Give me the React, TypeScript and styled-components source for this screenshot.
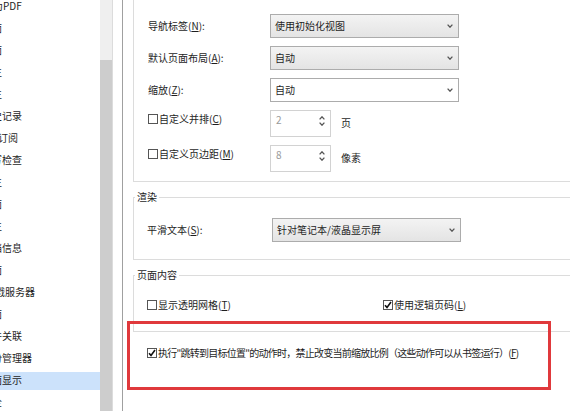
import React from "react";
import styled, { createGlobalStyle } from "styled-components";

const GlobalStyle = createGlobalStyle`
  html, body {
    margin: 0;
    padding: 0;
    background: #fff;
  }
  body {
    font-family: "Noto Sans CJK SC", "Noto Sans", sans-serif;
  }
`;

const navItems = [
  { text: "为PDF", shift: -7 },
  { text: "面", shift: -8 },
  { text: "面", shift: -8 },
  { text: "生", shift: -8 },
  { text: "生", shift: -8 },
  { text: "史记录", shift: -8 },
  { text: "订阅", shift: -2 },
  { text: "写检查", shift: -8 },
  { text: "生", shift: -8 },
  { text: "面", shift: -8 },
  { text: "生", shift: -8 },
  { text: "档信息", shift: -8 },
  { text: "面", shift: -8 },
  { text: "戳服务器", shift: -5 },
  { text: "面", shift: -8 },
  { text: "件关联", shift: -8 },
  { text: "份管理器", shift: -8 },
  { text: "面显示", shift: -8, selected: true },
  { text: "全", shift: -8 },
];

function Chevron({ up }: { up?: boolean }) {
  return (
    <svg width="6" height="4" viewBox="0 0 6 4">
      <path
        d={up ? "M0.6 3.4 L3 0.8 L5.4 3.4" : "M0.6 0.6 L3 3.2 L5.4 0.6"}
        fill="none"
        stroke="#555"
        strokeWidth="1.3"
      />
    </svg>
  );
}

function Check({ checked, children }: { checked?: boolean; children: React.ReactNode }) {
  return (
    <CheckLabel>
      <CheckBox>
        {checked && (
          <svg width="8" height="8" viewBox="0 0 8 8">
            <path d="M1 4.2 L3 6.4 L7 1" fill="none" stroke="#111" strokeWidth="1.6" />
          </svg>
        )}
      </CheckBox>
      <span>{children}</span>
    </CheckLabel>
  );
}

function Select({ value, plain }: { value: string; plain?: boolean }) {
  return (
    <SelectBox $plain={plain}>
      <span>{value}</span>
      <Chevron />
    </SelectBox>
  );
}

function Spinner({ value }: { value: string }) {
  return (
    <SpinBox>
      <span>{value}</span>
      <SpinArrows>
        <Chevron up />
        <Chevron />
      </SpinArrows>
    </SpinBox>
  );
}

export default function App() {
  return (
    <Frame>
      <GlobalStyle />
      <Sidebar>
        {navItems.map((item, i) => (
          <Item key={i} $selected={item.selected}>
            <ItemText $shift={item.shift}>{item.text}</ItemText>
          </Item>
        ))}
      </Sidebar>
      <Scrollbar>
        <Thumb />
      </Scrollbar>
      <Panel>
        <TopGroup>
          <FieldRow $labelWidth={122}>
            <span>
              导航标签(<u>N</u>):
            </span>
            <Select value="使用初始化视图" />
          </FieldRow>
          <FieldRow $labelWidth={122}>
            <span>
              默认页面布局(<u>A</u>):
            </span>
            <Select value="自动" />
          </FieldRow>
          <FieldRow $labelWidth={122}>
            <span>
              缩放(<u>Z</u>):
            </span>
            <Select value="自动" plain />
          </FieldRow>
          <SpinRow $labelWidth={122}>
            <RowLabel>
              <Check>
                自定义并排(<u>C</u>)
              </Check>
            </RowLabel>
            <Spinner value="2" />
            <Unit>页</Unit>
          </SpinRow>
          <SpinRow $labelWidth={122}>
            <RowLabel>
              <Check>
                自定义页边距(<u>M</u>)
              </Check>
            </RowLabel>
            <Spinner value="8" />
            <Unit>像素</Unit>
          </SpinRow>
        </TopGroup>

        <Group>
          <Legend>渲染</Legend>
          <GroupBody $top={14} $bottom={17}>
            <FieldRow $labelWidth={125}>
              <span>
                平滑文本(<u>S</u>):
              </span>
              <Select value="针对笔记本/液晶显示屏" />
            </FieldRow>
          </GroupBody>
        </Group>

        <Group>
          <Legend>页面内容</Legend>
          <GroupBody $top={16} $bottom={19}>
            <CheckRow>
              <Check>
                显示透明网格(<u>T</u>)
              </Check>
              <Check checked>
                使用逻辑页码(<u>L</u>)
              </Check>
            </CheckRow>
          </GroupBody>
        </Group>

        <LooseRow>
          <Check checked>
            执行"跳转到目标位置"的动作时，禁止改变当前缩放比例（这些动作可以从书签运行）(<u>F</u>)
          </Check>
        </LooseRow>
      </Panel>
      <Highlight />
    </Frame>
  );
}

const Frame = styled.div`
  position: relative;
  display: flex;
  width: 570px;
  height: 411px;
  overflow: hidden;
  background: #fff;
  font-size: 10px;
  color: #1e1e1e;
`;

const Sidebar = styled.ul`
  flex: none;
  width: 100px;
  margin: -5px 0 0;
  padding: 0;
  list-style: none;
  overflow: hidden;
`;

const Item = styled.li<{ $selected?: boolean }>`
  height: 22px;
  line-height: 22px;
  white-space: nowrap;
  overflow: hidden;
  background: ${({ $selected }) =>
    $selected
      ? "linear-gradient(transparent 3px, #cce2fb 3px, #cce2fb 21px, transparent 21px)"
      : "none"};
`;

const ItemText = styled.span<{ $shift: number }>`
  display: inline-block;
  margin-left: ${({ $shift }) => $shift}px;
`;

const Scrollbar = styled.div`
  flex: none;
  display: flex;
  flex-direction: column;
  width: 12px;
  background: #efefef;
  border-right: 1px solid #dcdcdc;
`;

const Thumb = styled.div`
  flex: 1;
  margin-top: 60px;
  background: #cdcdcd;
`;

const Panel = styled.div`
  flex: none;
  width: 470px;
  margin-left: 9px;
  padding-left: 10px;
  border-left: 1px solid #a0a0a0;
  overflow: hidden;
`;

const TopGroup = styled.div`
  display: flex;
  flex-direction: column;
  gap: 8px;
  width: 470px;
  padding: 14px 0 9px 14px;
  box-sizing: border-box;
  border: 1px solid #dcdcdc;
  border-top: none;
`;

const FieldRow = styled.div<{ $labelWidth: number }>`
  display: grid;
  grid-template-columns: ${({ $labelWidth }) => $labelWidth}px auto auto;
  justify-content: start;
  align-items: center;
  line-height: 14px;
`;

const SpinRow = styled(FieldRow)`
  align-items: start;
`;

const RowLabel = styled.div`
  padding-top: 2px;
`;

const Unit = styled.span`
  padding: 6px 0 0 10px;
`;

const SelectBox = styled.div<{ $plain?: boolean }>`
  display: flex;
  align-items: center;
  justify-content: space-between;
  box-sizing: border-box;
  width: 189px;
  height: 24px;
  padding: 0 5px 0 4px;
  border: 1px solid #acacac;
  background: ${({ $plain }) => ($plain ? "#fff" : "linear-gradient(#f3f3f3, #e4e4e4)")};
`;

const SpinBox = styled.div`
  display: flex;
  justify-content: space-between;
  box-sizing: border-box;
  width: 61px;
  height: 27px;
  padding: 2px 5px 0 5px;
  border: 1px solid #d2d2d2;
  color: #9a9a9a;
`;

const SpinArrows = styled.div`
  display: flex;
  flex-direction: column;
  gap: 2px;
  padding-top: 3px;
`;

const CheckLabel = styled.label`
  display: inline-flex;
  align-items: center;
  gap: 1px;
  white-space: nowrap;
`;

const CheckBox = styled.span`
  display: inline-flex;
  align-items: center;
  justify-content: center;
  width: 8px;
  height: 8px;
  border: 1px solid #555;
  background: #fff;
`;

const Group = styled.fieldset`
  width: 470px;
  min-width: 0;
  box-sizing: border-box;
  margin: 8px 0 0;
  padding: 0;
  border: 1px solid #dcdcdc;
`;

const Legend = styled.legend`
  margin-left: 1px;
  padding: 0 2px;
  line-height: 14px;
`;

const GroupBody = styled.div<{ $top: number; $bottom: number }>`
  padding: ${({ $top, $bottom }) => `${$top}px 0 ${$bottom}px 13px`};
`;

const CheckRow = styled.div`
  display: grid;
  grid-template-columns: 236px auto;
  justify-content: start;
  line-height: 14px;
`;

const LooseRow = styled.div`
  margin-top: 14px;
  padding-left: 14px;
  line-height: 14px;
  letter-spacing: -0.75px;
`;

const Highlight = styled.div`
  position: absolute;
  left: 127px;
  top: 321px;
  width: 424px;
  height: 69px;
  box-sizing: border-box;
  border: 3px solid #e0393c;
  pointer-events: none;
`;
